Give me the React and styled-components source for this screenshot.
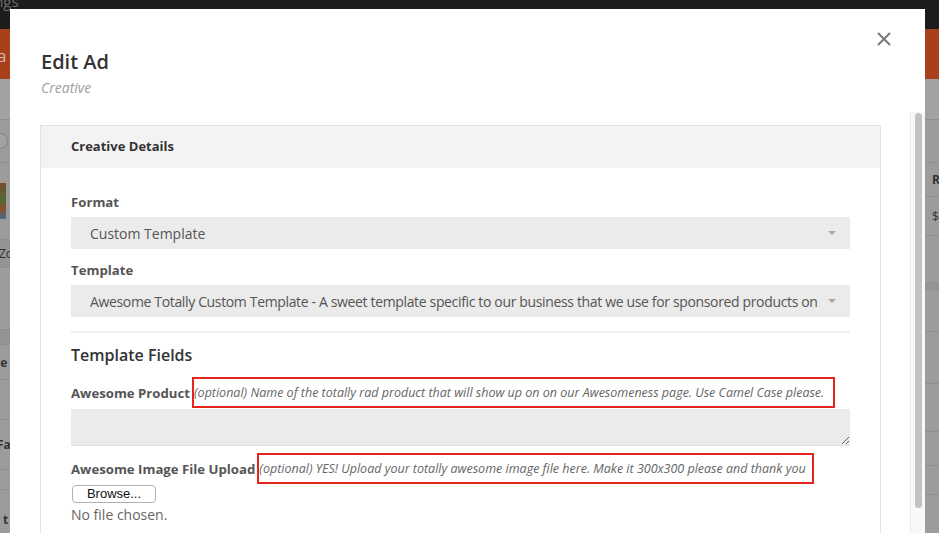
import React from "react";
import styled, { createGlobalStyle } from "styled-components";

const Global = createGlobalStyle`
  html, body { margin: 0; padding: 0; }
  body {
    width: 939px; height: 533px; overflow: hidden;
    font-family: "Open Sans", "Liberation Sans", sans-serif;
    background: #9b9b9b;
  }
  * { box-sizing: border-box; }
`;

/* ---------- dimmed page behind the modal ---------- */
const Page = styled.div`
  width: 939px; height: 533px; display: flex; flex-direction: column; overflow: hidden;
`;
const TopNav = styled.div`
  height: 29px; background: #1c1c1c; flex: none; overflow: hidden;
`;
const NavText = styled.div`
  color: #6c6c6c; font-size: 15px; line-height: 14px; margin: -6px 0 0 -37px;
`;
const Band = styled.div`
  height: 50px; background: #a8411b; flex: none; overflow: hidden; display: flex; align-items: center;
`;
const BandText = styled.div`
  color: #d8b8aa; font-size: 17px; margin-left: -3px; margin-top: 2px;
`;
const PageBody = styled.div`
  flex: 1; display: flex; justify-content: space-between;
`;
const Strip = styled.div`
  width: ${(p) => p.$w}px; display: flex; flex-direction: column; overflow: hidden;
`;
const Row = styled.div`
  height: ${(p) => p.$h}px; flex: none; background: ${(p) => p.$bg || "#9c9c9c"};
  border-bottom: 1px solid #8f8f8f; display: flex; align-items: center;
  font-size: 12px; color: #333; white-space: nowrap; overflow: hidden;
  font-weight: ${(p) => (p.$bold ? 700 : 400)};
  padding-left: ${(p) => p.$pl || 0}px;
  margin-left: ${(p) => p.$ml || 0}px;
`;
const Thumb = styled.div`
  width: 6px; height: 36px; background: linear-gradient(160deg, #7a4a2a 0%, #4f6a36 45%, #8a4f2c 70%, #3d6ea3 100%);
`;
const SearchDot = styled.div`
  width: 16px; height: 16px; border-radius: 50%; border: 1px solid #868686; margin-left: -8px; background: #a2a2a2;
`;

/* ---------- modal ---------- */
const Modal = styled.div`
  position: fixed; top: 9px; left: 10px; width: 915px; bottom: 0;
  background: #fff; display: flex; flex-direction: column;
`;
const Header = styled.div`
  display: flex; justify-content: space-between; align-items: flex-start;
  padding: 39px 34px 14px 31px; flex: none;
`;
const Titles = styled.div`display: flex; flex-direction: column;`;
const Title = styled.h1`
  margin: 0; font-size: 20px; line-height: 28px; font-weight: 600; color: #333;
`;
const Subtitle = styled.div`
  margin-top: 2px; font-size: 14px; line-height: 20px; font-style: italic; color: #a0a0a0;
`;
const Close = styled.button`
  border: 0; background: none; padding: 0; margin-top: -16px; width: 14px; height: 14px;
  display: flex; cursor: pointer;
`;
const BodyWrap = styled.div`
  flex: 1; min-height: 0; display: flex;
`;
const Body = styled.div`
  flex: 1; overflow: hidden; padding: 13px 29px 0 30px;
`;
const ScrollTrack = styled.div`
  width: 15px; flex: none; background: #f8f8f8; border-left: 1px solid #ececec;
  padding: 1px 3px 0 4px;
`;
const ScrollThumb = styled.div`
  height: 395px; border-radius: 4px; background: #c2c2c2;
`;
const Panel = styled.section`
  border: 1px solid #e2e2e2;
`;
const PanelHead = styled.div`
  height: 42px; line-height: 41px; background: #f3f3f3; padding: 0 30px;
  font-size: 13px; font-weight: 700; color: #333;
`;
const PanelBody = styled.div`
  padding: 25px 30px 24px 30px; display: flex; flex-direction: column;
`;
const Label = styled.div`
  font-size: 13.2px; line-height: 18px; font-weight: 700; color: #555;
  margin-top: ${(p) => p.$mt || 0}px; margin-bottom: 6px;
`;
const Select = styled.div`
  height: 32px; background: #ebebeb; display: flex; align-items: center;
  padding: 0 14px 0 19px; font-size: 14px; color: #555; gap: 8px;
`;
const SelectText = styled.span`
  flex: 1; white-space: nowrap; overflow: hidden;
  letter-spacing: ${(p) => (p.$tight ? "-0.35px" : "normal")};
`;
const Caret = styled.span`
  width: 0; height: 0; border-left: 4px solid transparent; border-right: 4px solid transparent;
  border-top: 4px solid #a8a8a8; flex: none;
`;
const Rule = styled.hr`
  border: 0; height: 2px; background: #efefef; margin: 14px 0 11px 0;
`;
const SectionTitle = styled.h2`
  margin: 0; font-size: 16px; line-height: 22px; font-weight: 600; color: #333;
`;
const FieldRow = styled.div`
  display: flex; align-items: center; margin-top: ${(p) => p.$mt}px; height: 31px;
`;
const FieldLabel = styled.span`
  font-size: 13.2px; font-weight: 700; color: #555; white-space: nowrap;
`;
const Hint = styled.span`
  display: inline-flex; align-items: center; height: 31px;
  border: 2px solid #e5241b; margin-left: ${(p) => p.$ml}px;
  padding: 0 ${(p) => p.$pr}px 0 ${(p) => p.$pl}px;
  font-size: 12.5px; font-style: italic; color: #666; white-space: nowrap;
`;
const TextArea = styled.textarea`
  display: block; width: 100%; height: 37px; margin-top: 1px; background: #ebebeb;
  border: 0; border-bottom: 1px solid #e0e0e0; resize: vertical; padding: 6px 10px;
  font-family: inherit; outline: none;
`;
const FileButton = styled.button`
  align-self: flex-start; margin: 1px 0 0 1px; width: 84px; height: 18px; padding: 0;
  background: #fff; border: 1px solid #b0b0b0; border-radius: 4px;
  font-family: "Liberation Sans", Arial, sans-serif; font-size: 13px; color: #111; line-height: 16px;
`;
const FileNote = styled.div`
  font-size: 14px; line-height: 20px; color: #666; margin-top: 2px;
`;

const leftRows = [
  { h: 41, bg: "#a2a2a2" },
  { h: 43, content: <SearchDot /> },
  { h: 77, content: <Thumb /> },
  { h: 28, bg: "#949494", text: "Zo", ml: -1 },
  { h: 62 },
  { h: 15, bg: "#939393" },
  { h: 35, text: "te", bold: true, ml: -5 },
  { h: 40 },
  { h: 50, text: "Fa", bold: true, ml: -3 },
  { h: 20 },
  { h: 60, text: "t", bold: true, ml: 3 },
];
const rightRows = [
  { h: 41, bg: "#a2a2a2" },
  { h: 43 },
  { h: 34, text: "R", bold: true, pl: 7 },
  { h: 39, text: "$", pl: 7 },
  { h: 47 },
  { h: 7, bg: "#949494" },
  { h: 42 },
  { h: 52 },
  { h: 48 },
  { h: 34 },
  { h: 29 },
  { h: 60 },
];

const renderRows = (rows) =>
  rows.map((r, i) => (
    <Row key={i} $h={r.h} $bg={r.bg} $bold={r.bold} $pl={r.pl} $ml={r.ml}>
      {r.content || r.text}
    </Row>
  ));

export default function App() {
  return (
    <>
      <Global />
      <Page>
        <TopNav><NavText>Settings</NavText></TopNav>
        <Band><BandText>a</BandText></Band>
        <PageBody>
          <Strip $w={10}>{renderRows(leftRows)}</Strip>
          <Strip $w={14}>{renderRows(rightRows)}</Strip>
        </PageBody>
      </Page>
      <Modal>
        <Header>
          <Titles>
            <Title>Edit Ad</Title>
            <Subtitle>Creative</Subtitle>
          </Titles>
          <Close aria-label="Close">
            <svg width="14" height="14" viewBox="0 0 14 14">
              <path d="M1 1 L13 13 M13 1 L1 13" stroke="#777" strokeWidth="2" fill="none" />
            </svg>
          </Close>
        </Header>
        <BodyWrap>
          <Body>
            <Panel>
              <PanelHead>Creative Details</PanelHead>
              <PanelBody>
                <Label>Format</Label>
                <Select>
                  <SelectText>Custom Template</SelectText>
                  <Caret />
                </Select>
                <Label $mt={12}>Template</Label>
                <Select>
                  <SelectText $tight>
                    Awesome Totally Custom Template - A sweet template specific to our business that we use for sponsored products on the homepage
                  </SelectText>
                  <Caret />
                </Select>
                <Rule />
                <SectionTitle>Template Fields</SectionTitle>
                <FieldRow $mt={11}>
                  <FieldLabel>Awesome Product</FieldLabel>
                  <Hint $ml={2} $pl={0} $pr={9}>
                    (optional) Name of the totally rad product that will show up on on our Awesomeness page. Use Camel Case please.
                  </Hint>
                </FieldRow>
                <TextArea />
                <FieldRow $mt={7}>
                  <FieldLabel>Awesome Image File Upload</FieldLabel>
                  <Hint $ml={2} $pl={0} $pr={6}>
                    (optional) YES! Upload your totally awesome image file here. Make it 300x300 please and thank you
                  </Hint>
                </FieldRow>
                <FileButton>Browse...</FileButton>
                <FileNote>No file chosen.</FileNote>
              </PanelBody>
            </Panel>
          </Body>
          <ScrollTrack>
            <ScrollThumb />
          </ScrollTrack>
        </BodyWrap>
      </Modal>
    </>
  );
}
